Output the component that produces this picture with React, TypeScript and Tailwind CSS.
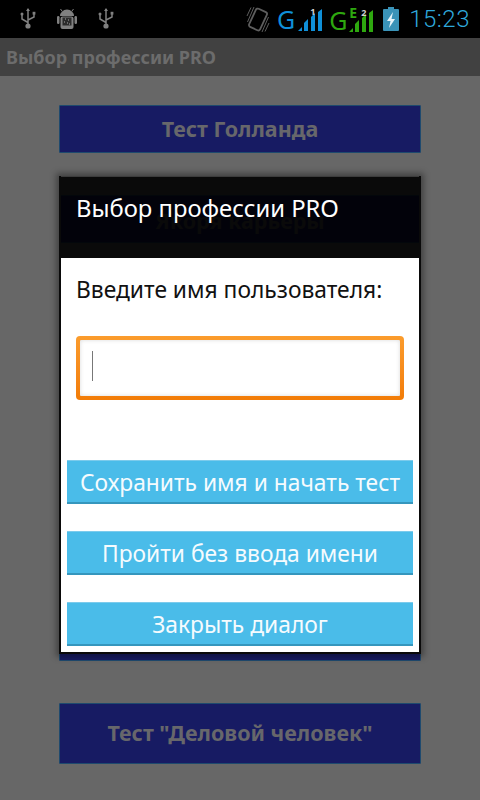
const UsbIcon = () => (
  <svg width="20" height="22" viewBox="0 0 20 22" fill="none" stroke="#808080" strokeWidth="1.5">
    <path d="M10 1v16M10 14.5 4 11V7M10 12l6-3V6" />
    <path d="M10 0 8 3h4z" fill="#808080" stroke="none" />
    <circle cx="10" cy="18" r="2.6" fill="#808080" stroke="none" />
    <circle cx="4" cy="6" r="1.5" fill="#808080" stroke="none" />
    <rect x="14.6" y="3.8" width="2.8" height="2.8" fill="#808080" stroke="none" />
  </svg>
)

const AndroidIcon = () => (
  <svg width="20" height="22" viewBox="0 0 20 22">
    <path d="M3 8a7 6.5 0 0 1 14 0z" fill="#808080" />
    <path d="M5 3 3.500 1M15 3l1.500-2" stroke="#808080" strokeWidth="1" />
    <rect x="0" y="8" width="2.500" height="8" rx="1.200" fill="#808080" />
    <rect x="17.500" y="8" width="2.500" height="8" rx="1.200" fill="#808080" />
    <rect x="3.500" y="8.500" width="13" height="12.500" rx="2" fill="#808080" />
    <rect x="5.500" y="9.500" width="9" height="8" fill="#2b2b2b" />
    <path d="M8 11h1M11 12h1M7 14h1M10 15h1M12 16h1" stroke="#aaaaaa" strokeWidth="1" />
  </svg>
)

const RotateIcon = () => (
  <svg width="24" height="27" viewBox="0 0 24 27" fill="none" stroke="#5e5e5e">
    <rect x="6" y="3.500" width="12" height="20" rx="2" transform="rotate(25 12 13.500)" strokeWidth="1.800" />
    <path d="M1 10 5 1.500M1.500 16 8 1M23 17l-4 8.500M22.500 11 16 26" strokeWidth="1" />
  </svg>
)

const Signal = ({ color }: { color: string }) => (
  <svg width="24" height="22" viewBox="0 0 24 22" fill={color}>
    <path d="M0 22 4 18v4zM6 22v-8l4-4v12zM13 22V8l4-4v18zM20 22V3l4-3v22z" />
  </svg>
)

const BatteryIcon = () => (
  <svg width="16" height="24" viewBox="0 0 16 24">
    <rect x="5" y="0" width="6" height="3" fill="#3a93b8" />
    <rect x="0" y="2" width="16" height="22" rx="1" fill="#3a93b8" />
    <path d="M10 5 4 14h3.500L6 21l6-9H8.500z" fill="#e6f4fa" />
  </svg>
)

const BgButton = ({ label, className }: { label: string; className: string }) => (
  <div className={`flex w-[362px] items-center justify-center rounded-[1px] border border-[#1f4a6e] bg-[#171b63] text-[21.500px] font-bold text-[#67676b] ${className}`}>
    {label}
  </div>
)

const DialogButton = ({ label }: { label: string }) => (
  <div className="flex h-[44px] w-[346px] items-center justify-center border-t border-b-2 border-t-[#7ccbec] border-b-[#3596bd] bg-[#4abce9] pt-[4px] text-[22.800px] text-[#f5fbfe]">
    {label}
  </div>
)

export default function App() {
  return (
    <div className="relative h-[800px] w-[480px] overflow-hidden bg-[#676767] font-['Noto_Sans',sans-serif]">
      <div className="flex h-[38px] items-center bg-black">
        <div className="ml-[18px] flex items-center gap-[19px]">
          <UsbIcon />
          <AndroidIcon />
          <UsbIcon />
        </div>
        <div className="ml-auto flex items-center pr-[10px]">
          <RotateIcon />
          <div className="ml-[7px] flex items-end">
            <span className="text-[25px] leading-[28px] text-[#0f8fd8]">G</span>
            <div className="relative mb-[2px] ml-[3px]">
              <Signal color="#0f8fd8" />
              <span className="absolute left-[12px] top-[-2px] text-[9px] font-bold leading-[10px] text-[#d0d0d0]">1</span>
            </div>
          </div>
          <div className="ml-[7px] flex items-end">
            <span className="text-[25px] leading-[28px] text-[#2ea80f]">G</span>
            <span className="mb-[13px] ml-[2px] text-[14px] font-bold leading-[16px] text-[#2ea80f]">E</span>
            <div className="relative mb-[2px] ml-[-8px]">
              <Signal color="#2ea80f" />
              <span className="absolute left-[12px] top-[-2px] text-[9px] font-bold leading-[10px] text-[#d0d0d0]">2</span>
            </div>
          </div>
          <div className="ml-[10px] flex">
            <BatteryIcon />
          </div>
          <span className="ml-[10px] font-['Roboto',sans-serif] text-[24px] font-light leading-[38px] tracking-[0.5px] text-[#2fa9dc]">15:23</span>
        </div>
      </div>

      <div className="flex h-[38px] items-center bg-[#414141] pl-[6px] text-[18px] font-bold text-[#6c6c6c]">
        Выбор профессии PRO
      </div>

      <div className="flex flex-col items-center">
        <BgButton label="Тест Голланда" className="mt-[29px] h-[48px] pt-[1px]" />
        <BgButton label="Якоря карьеры" className="mt-[42px] h-[48px] pt-[4px]" />
        <BgButton label="" className="mt-[370px] h-[48px]" />
        <BgButton label={'Тест "Деловой человек"'} className="mt-[42px] h-[61px]" />
      </div>

      <div className="absolute left-[59px] top-[176px] w-[362px] shadow-[0_0_6px_3px_rgba(0,0,0,0.35)]">
        <div className="border-2 border-t-0 border-[#0a0a0a]">
          <div className="h-[82px] border-t border-t-[#3c3c3c] bg-black/90 pl-[15px] pt-[15px] text-[23.800px] leading-[32px] text-white">
            Выбор профессии PRO
          </div>
          <div className="flex h-[394px] flex-col bg-white">
            <div className="pl-[15px] pt-[18px] text-[22.800px] leading-[28px] text-[#111111]">
              Введите имя пользователя:
            </div>
            <div className="ml-[15px] mt-[32px] h-[64px] w-[328px] rounded-[4px] bg-linear-to-b from-[#fb9c2c] to-[#f27c06] p-[4px]">
              <div className="h-full rounded-[1px] bg-white pl-[12px] pt-[11px] shadow-[inset_0_0_4px_rgba(0,0,0,0.15)]">
                <div className="h-[30px] w-px bg-[#777777]" />
              </div>
            </div>
            <div className="ml-[6px] mt-[60px] flex flex-col gap-[27px]">
              <DialogButton label="Сохранить имя и начать тест" />
              <DialogButton label="Пройти без ввода имени" />
              <DialogButton label="Закрыть диалог" />
            </div>
          </div>
        </div>
      </div>
    </div>
  )
}
